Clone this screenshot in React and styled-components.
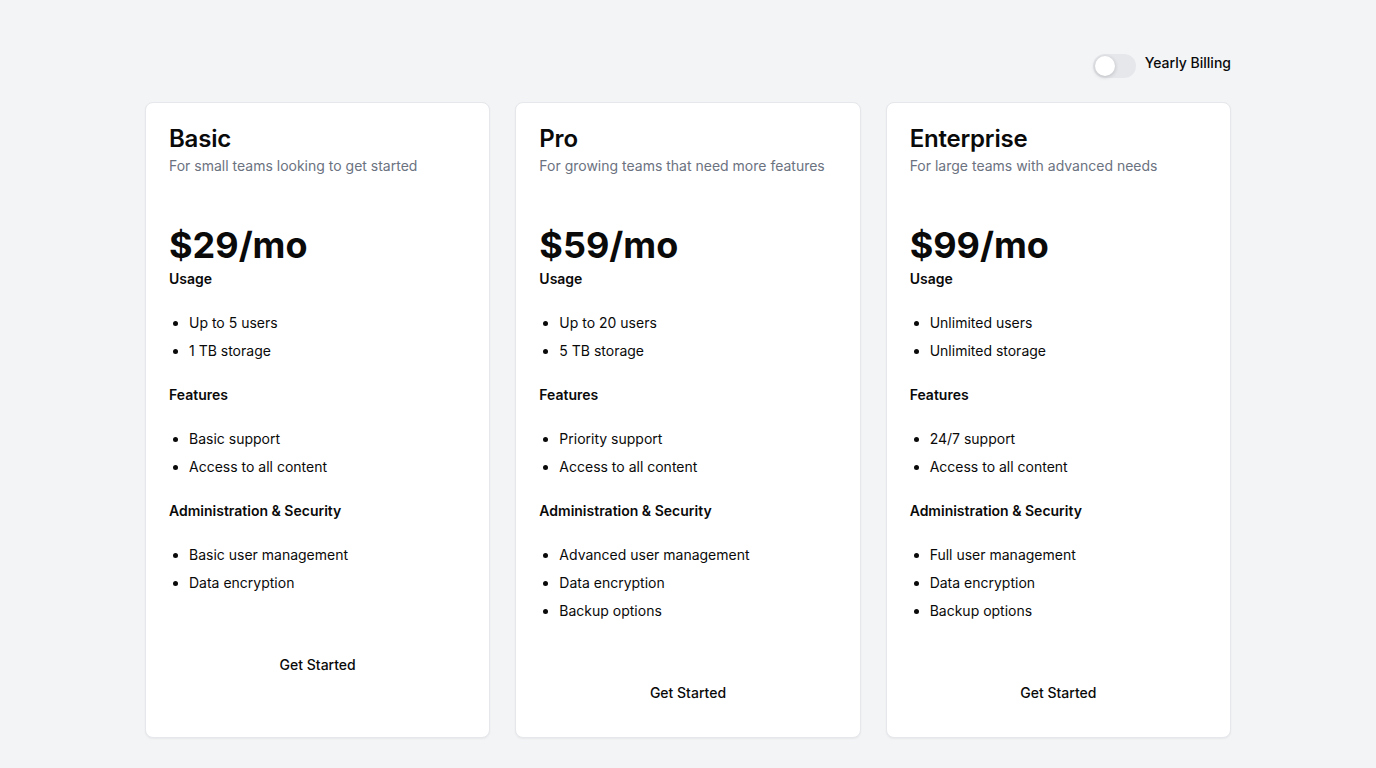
import React, { useState } from 'react'
import styled, { createGlobalStyle } from 'styled-components'

const GlobalStyle = createGlobalStyle`
  * { box-sizing: border-box; }
  body {
    margin: 0;
    background: #f3f4f6;
    font-family: Inter, "Noto Sans", sans-serif;
    color: #0a0a0a;
  }
`

const Page = styled.div`
  min-height: 100vh;
  padding-top: 53px;
`

const Container = styled.div`
  width: 1086px;
  margin: 0 auto;
`

const ToggleRow = styled.div`
  display: flex;
  justify-content: flex-end;
  align-items: flex-start;
  gap: 9px;
  height: 24px;
  margin-bottom: 25px;
`

const Switch = styled.button`
  width: 43px;
  height: 24px;
  border: none;
  border-radius: 12px;
  background: ${p => (p.$on ? '#0a0a0a' : '#e5e7eb')};
  padding: 2px;
  display: flex;
  justify-content: ${p => (p.$on ? 'flex-end' : 'flex-start')};
  cursor: pointer;
  margin-top: 1px;
`

const Knob = styled.span`
  width: 20px;
  height: 20px;
  border-radius: 50%;
  background: #fff;
  box-shadow: 0 1px 4px rgba(0, 0, 0, 0.2);
`

const ToggleLabel = styled.span`
  font-size: 14px;
  font-weight: 500;
  line-height: 20px;
  color: #0a0a0a;
`

const Grid = styled.div`
  display: grid;
  grid-template-columns: repeat(3, 1fr);
  gap: 25px;
`

const Card = styled.div`
  background: #fff;
  border: 1px solid #e5e7eb;
  border-radius: 8px;
  box-shadow: 0 1px 2px rgba(0, 0, 0, 0.05);
  padding: 23px 23px 25px;
  display: flex;
  flex-direction: column;
`

const Title = styled.h2`
  margin: 1px 0 0;
  font-size: 24px;
  line-height: 24px;
  font-weight: 600;
  letter-spacing: -0.2px;
`

const Subtitle = styled.p`
  margin: 5px 0 0;
  font-size: 14px;
  line-height: 20px;
  color: #6b7280;
`

const Price = styled.div`
  margin-top: 51px;
  font-size: 36px;
  line-height: 36px;
  font-weight: 700;
`

const SectionTitle = styled.h3`
  margin: ${p => (p.$first ? '6px' : '24px')} 0 0;
  font-size: 14px;
  line-height: 20px;
  font-weight: 600;
`

const List = styled.ul`
  margin: 24px 0 0;
  padding-left: 20px;
  display: flex;
  flex-direction: column;
  gap: 8px;
`

const Item = styled.li`
  font-size: 14px;
  line-height: 20px;
`

const Button = styled.button`
  margin-top: 51px;
  height: 40px;
  border: none;
  background: transparent;
  font-family: inherit;
  font-size: 14px;
  font-weight: 500;
  color: #0a0a0a;
  cursor: pointer;
`

const plans = [
  {
    name: 'Basic',
    desc: 'For small teams looking to get started',
    price: 29,
    usage: ['Up to 5 users', '1 TB storage'],
    features: ['Basic support', 'Access to all content'],
    admin: ['Basic user management', 'Data encryption'],
  },
  {
    name: 'Pro',
    desc: 'For growing teams that need more features',
    price: 59,
    usage: ['Up to 20 users', '5 TB storage'],
    features: ['Priority support', 'Access to all content'],
    admin: ['Advanced user management', 'Data encryption', 'Backup options'],
  },
  {
    name: 'Enterprise',
    desc: 'For large teams with advanced needs',
    price: 99,
    usage: ['Unlimited users', 'Unlimited storage'],
    features: ['24/7 support', 'Access to all content'],
    admin: ['Full user management', 'Data encryption', 'Backup options'],
  },
]

const Plan = ({ plan }) => (
  <Card>
    <Title>{plan.name}</Title>
    <Subtitle>{plan.desc}</Subtitle>
    <Price>${plan.price}/mo</Price>
    <SectionTitle $first>Usage</SectionTitle>
    <List>
      {plan.usage.map(u => <Item key={u}>{u}</Item>)}
    </List>
    <SectionTitle>Features</SectionTitle>
    <List>
      {plan.features.map(f => <Item key={f}>{f}</Item>)}
    </List>
    <SectionTitle>Administration &amp; Security</SectionTitle>
    <List>
      {plan.admin.map(a => <Item key={a}>{a}</Item>)}
    </List>
    <Button>Get Started</Button>
  </Card>
)

const App = () => {
  const [yearly, setYearly] = useState(false)
  return (
    <Page>
      <GlobalStyle />
      <Container>
        <ToggleRow>
          <Switch $on={yearly} onClick={() => setYearly(!yearly)}>
            <Knob />
          </Switch>
          <ToggleLabel>Yearly Billing</ToggleLabel>
        </ToggleRow>
        <Grid>
          {plans.map(p => <Plan key={p.name} plan={p} />)}
        </Grid>
      </Container>
    </Page>
  )
}

export default App
